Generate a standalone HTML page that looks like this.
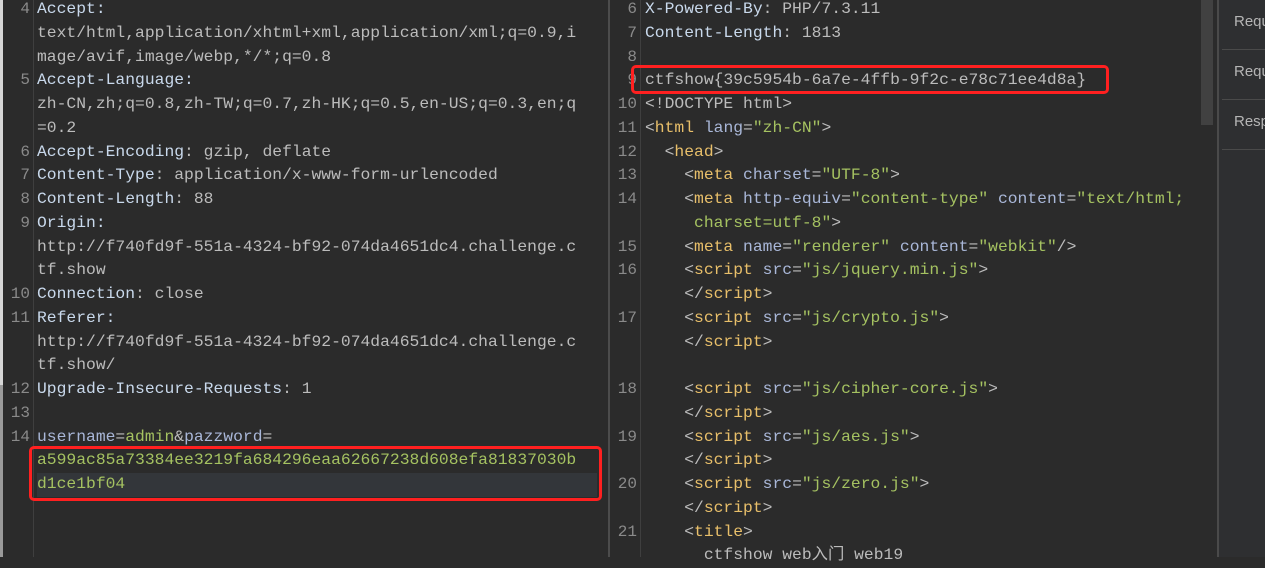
<!DOCTYPE html>
<html><head><meta charset="utf-8"><style>
body{margin:0;width:1265px;height:557px;overflow:hidden;background:#2b2b2b;position:relative;font-family:"Liberation Mono","Noto Sans CJK SC",monospace;font-size:16px;letter-spacing:0}
.l{position:absolute;height:23.75px;line-height:23.75px;white-space:pre;color:#bcbcbc;transform:scaleX(1.021);transform-origin:0 0}
.n{position:absolute;height:23.75px;line-height:23.75px;text-align:right;color:#8a8a8a}
.k{color:#c9d9ec}.v{color:#bcbcbc}.t{color:#e8bf6a}.a{color:#a9b7d8}.s{color:#a5c261}.p{color:#bcbcbc}
.box{position:absolute;border:3px solid #ff2020;border-radius:5px;box-sizing:border-box}
.side{position:absolute;left:1217px;top:0;width:48px;height:557px;background:#2e2f31;border-left:2px solid #4a4a4a;font-family:"Liberation Sans",sans-serif;font-size:15px;color:#b5b5b5;letter-spacing:0}
.side div{height:50px;border-bottom:1px solid #4a4a4a;margin-left:3px;line-height:44px;padding-left:12px;box-sizing:border-box}
</style></head><body>
<div style="position:absolute;left:0;top:0;width:3px;height:385px;background:#d6d6d6"></div>
<div style="position:absolute;left:0;top:385px;width:3px;height:172px;background:#9a9a9a"></div>
<div style="position:absolute;left:33px;top:0;width:1px;height:557px;background:#3f3f3f"></div>
<div style="position:absolute;left:608px;top:0;width:2px;height:557px;background:#4c4c4c"></div>
<div style="position:absolute;left:640px;top:0;width:1px;height:557px;background:#3f3f3f"></div>
<div style="position:absolute;left:1201px;top:0;width:12px;height:125px;background:#414141"></div>
<div style="position:absolute;left:37px;top:473px;width:560px;height:24px;background:#33363a"></div>

<!-- left pane -->
<div class="n" style="left:4px;width:26px;top:-2px">4</div><div class="l k" style="left:37px;top:-2px">Accept:</div>
<div class="l v" style="left:37px;top:21.75px">text/html,application/xhtml+xml,application/xml;q=0.9,i</div>
<div class="l v" style="left:37px;top:45.5px">mage/avif,image/webp,*/*;q=0.8</div>
<div class="n" style="left:4px;width:26px;top:69.25px">5</div><div class="l k" style="left:37px;top:69.25px">Accept-Language:</div>
<div class="l v" style="left:37px;top:93px">zh-CN,zh;q=0.8,zh-TW;q=0.7,zh-HK;q=0.5,en-US;q=0.3,en;q</div>
<div class="l v" style="left:37px;top:116.75px">=0.2</div>
<div class="n" style="left:4px;width:26px;top:140.5px">6</div><div class="l" style="left:37px;top:140.5px"><span class="k">Accept-Encoding</span>: gzip, deflate</div>
<div class="n" style="left:4px;width:26px;top:164.25px">7</div><div class="l" style="left:37px;top:164.25px"><span class="k">Content-Type</span>: application/x-www-form-urlencoded</div>
<div class="n" style="left:4px;width:26px;top:188px">8</div><div class="l" style="left:37px;top:188px"><span class="k">Content-Length</span>: 88</div>
<div class="n" style="left:4px;width:26px;top:211.75px">9</div><div class="l k" style="left:37px;top:211.75px">Origin:</div>
<div class="l v" style="left:37px;top:235.5px">http://f740fd9f-551a-4324-bf92-074da4651dc4.challenge.c</div>
<div class="l v" style="left:37px;top:259.25px">tf.show</div>
<div class="n" style="left:4px;width:26px;top:283px">10</div><div class="l" style="left:37px;top:283px"><span class="k">Connection</span>: close</div>
<div class="n" style="left:4px;width:26px;top:306.75px">11</div><div class="l k" style="left:37px;top:306.75px">Referer:</div>
<div class="l v" style="left:37px;top:330.5px">http://f740fd9f-551a-4324-bf92-074da4651dc4.challenge.c</div>
<div class="l v" style="left:37px;top:354.25px">tf.show/</div>
<div class="n" style="left:4px;width:26px;top:378px">12</div><div class="l" style="left:37px;top:378px"><span class="k">Upgrade-Insecure-Requests</span>: 1</div>
<div class="n" style="left:4px;width:26px;top:401.75px">13</div>
<div class="n" style="left:4px;width:26px;top:425.5px">14</div><div class="l" style="left:37px;top:425.5px"><span class="a">username</span>=<span class="s">admin</span>&amp;<span class="a">pazzword</span>=</div>
<div class="l s" style="left:37px;top:449.25px">a599ac85a73384ee3219fa684296eaa62667238d608efa81837030b</div>
<div class="l s" style="left:37px;top:473px">d1ce1bf04</div>
<div class="box" style="left:29px;top:446px;width:573px;height:55px"></div>

<!-- right pane -->
<div class="n" style="left:612px;width:25px;top:-2px">6</div><div class="l" style="left:645px;top:-2px"><span class="k">X-Powered-By</span>: PHP/7.3.11</div>
<div class="n" style="left:612px;width:25px;top:21.75px">7</div><div class="l" style="left:645px;top:21.75px"><span class="k">Content-Length</span>: 1813</div>
<div class="n" style="left:612px;width:25px;top:45.5px">8</div>
<div class="n" style="left:612px;width:25px;top:69.25px">9</div><div class="l v" style="left:645px;top:69.25px">ctfshow{39c5954b-6a7e-4ffb-9f2c-e78c71ee4d8a}</div>
<div class="box" style="left:631px;top:65px;width:478px;height:29px"></div>
<div class="n" style="left:612px;width:25px;top:93px">10</div><div class="l" style="left:645px;top:93px">&lt;!DOCTYPE html&gt;</div>
<div class="n" style="left:612px;width:25px;top:116.75px">11</div><div class="l" style="left:645px;top:116.75px">&lt;<span class="t">html</span> <span class="a">lang</span>=<span class="s">"zh-CN"</span>&gt;</div>
<div class="n" style="left:612px;width:25px;top:140.5px">12</div><div class="l" style="left:645px;top:140.5px">  &lt;<span class="t">head</span>&gt;</div>
<div class="n" style="left:612px;width:25px;top:164.25px">13</div><div class="l" style="left:645px;top:164.25px">    &lt;<span class="t">meta</span> <span class="a">charset</span>=<span class="s">"UTF-8"</span>&gt;</div>
<div class="n" style="left:612px;width:25px;top:188px">14</div><div class="l" style="left:645px;top:188px">    &lt;<span class="t">meta</span> <span class="a">http-equiv</span>=<span class="s">"content-type"</span> <span class="a">content</span>=<span class="s">"text/html;</span></div>
<div class="l s" style="left:645px;top:211.75px">     charset=utf-8"<span class="p">&gt;</span></div>
<div class="n" style="left:612px;width:25px;top:235.5px">15</div><div class="l" style="left:645px;top:235.5px">    &lt;<span class="t">meta</span> <span class="a">name</span>=<span class="s">"renderer"</span> <span class="a">content</span>=<span class="s">"webkit"</span>/&gt;</div>
<div class="n" style="left:612px;width:25px;top:259.25px">16</div><div class="l" style="left:645px;top:259.25px">    &lt;<span class="t">script</span> <span class="a">src</span>=<span class="s">"js/jquery.min.js"</span>&gt;</div>
<div class="l" style="left:645px;top:283px">    &lt;/<span class="t">script</span>&gt;</div>
<div class="n" style="left:612px;width:25px;top:306.75px">17</div><div class="l" style="left:645px;top:306.75px">    &lt;<span class="t">script</span> <span class="a">src</span>=<span class="s">"js/crypto.js"</span>&gt;</div>
<div class="l" style="left:645px;top:330.5px">    &lt;/<span class="t">script</span>&gt;</div>
<div class="n" style="left:612px;width:25px;top:378px">18</div><div class="l" style="left:645px;top:378px">    &lt;<span class="t">script</span> <span class="a">src</span>=<span class="s">"js/cipher-core.js"</span>&gt;</div>
<div class="l" style="left:645px;top:401.75px">    &lt;/<span class="t">script</span>&gt;</div>
<div class="n" style="left:612px;width:25px;top:425.5px">19</div><div class="l" style="left:645px;top:425.5px">    &lt;<span class="t">script</span> <span class="a">src</span>=<span class="s">"js/aes.js"</span>&gt;</div>
<div class="l" style="left:645px;top:449.25px">    &lt;/<span class="t">script</span>&gt;</div>
<div class="n" style="left:612px;width:25px;top:473px">20</div><div class="l" style="left:645px;top:473px">    &lt;<span class="t">script</span> <span class="a">src</span>=<span class="s">"js/zero.js"</span>&gt;</div>
<div class="l" style="left:645px;top:496.75px">    &lt;/<span class="t">script</span>&gt;</div>
<div class="n" style="left:612px;width:25px;top:520.5px">21</div><div class="l" style="left:645px;top:520.5px">    &lt;<span class="t">title</span>&gt;</div>
<div class="l" style="left:645px;top:544.25px">      ctfshow web入门 web19</div>

<div class="side"><div>Requ</div><div>Requ</div><div>Resp</div></div>
</body></html>
